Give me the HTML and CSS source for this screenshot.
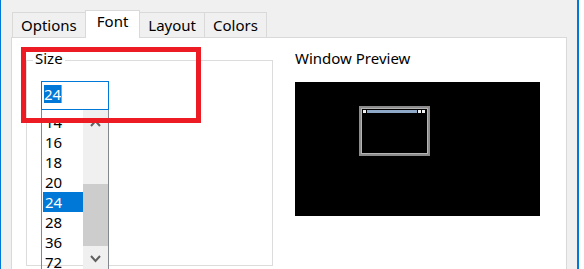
FILE: index.html
```html
<!DOCTYPE html>
<html>
<head>
<meta charset="utf-8">
<link rel="stylesheet" href="styles.css">
</head>
<body>
<div class="frame">
  <div class="tabs">
    <div class="tab">Options</div>
    <div class="tab active">Font</div>
    <div class="tab">Layout</div>
    <div class="tab">Colors</div>
  </div>
  <div class="panel">
    <fieldset class="group">
      <legend>Size</legend>
      <div class="combo">
        <div class="input"><span class="sel">24</span><span class="caret"></span></div>
        <div class="list">
          <div class="items">
            <div class="item">14</div>
            <div class="item">16</div>
            <div class="item">18</div>
            <div class="item">20</div>
            <div class="item selected">24</div>
            <div class="item">28</div>
            <div class="item">36</div>
            <div class="item">72</div>
          </div>
          <div class="scrollbar">
            <div class="arrow">
              <svg width="11" height="8" viewBox="0 0 11 8"><polyline points="1,7 5.5,2 10,7" fill="none" stroke="#606060" stroke-width="2"/></svg>
            </div>
            <div class="track"><div class="thumb"></div></div>
            <div class="arrow">
              <svg width="11" height="8" viewBox="0 0 11 8"><polyline points="1,1 5.5,6 10,1" fill="none" stroke="#606060" stroke-width="2"/></svg>
            </div>
          </div>
        </div>
      </div>
    </fieldset>
    <div class="preview-col">
      <div class="preview-label">Window Preview</div>
      <div class="preview">
        <div class="mini">
          <div class="mini-title">
            <span class="dot"></span>
            <span class="bar"></span>
            <span class="dot"></span>
            <span class="dot"></span>
          </div>
        </div>
      </div>
    </div>
  </div>
  <div class="highlight"></div>
</div>
</body>
</html>
```

FILE: styles.css
```css
* { box-sizing: border-box; }

html, body {
  margin: 0;
  padding: 0;
  width: 584px;
  height: 269px;
  overflow: hidden;
  background: #ffffff;
  font-family: "Noto Sans", "Open Sans", sans-serif;
  font-size: 15px;
  color: #000;
}

.frame {
  position: relative;
  width: 579px;
  height: 269px;
  background: #f0f0f0;
  border-left: 1px solid #0078d7;
  border-right: 2px solid #0078d7;
  overflow: hidden;
}

.tabs {
  display: flex;
  align-items: flex-end;
  margin: 10px 0 0 11px;
  height: 27px;
}

.tab {
  height: 25px;
  padding: 2px 8px 0 8px;
  line-height: 20px;
  border: 1px solid #d9d9d9;
  border-bottom: none;
  background: #f0f0f0;
  margin-left: -1px;
}

.tab:first-child { margin-left: 0; }

.tab.active {
  position: relative;
  z-index: 1;
  height: 28px;
  padding: 0 11px;
  background: #ffffff;
  margin-bottom: -1px;
}

.panel {
  display: flex;
  margin-left: 10px;
  width: 556px;
  height: 240px;
  background: #ffffff;
  border: 1px solid #d9d9d9;
  padding: 10px 0 0 14px;
}

.group {
  margin: 0;
  width: 247px;
  height: 218px;
  padding: 9px 0 0 14px;
  border: 1px solid #dcdcdc;
  flex: none;
}

.group legend {
  margin-left: -8px;
  padding: 0 2px 4px 2px;
  line-height: 20px;
}

.combo {
  width: 68px;
}

.input {
  display: flex;
  align-items: flex-start;
  height: 29px;
  border: 1px solid #0078d7;
  padding: 3px 0 0 2px;
}

.sel {
  background: #0078d7;
  color: #fff;
  line-height: 18px;
  height: 18px;
}

.caret {
  width: 1px;
  height: 18px;
  background: #ff8728;
}

.list {
  display: flex;
  height: 162px;
  border-left: 1px solid #828790;
  border-right: 1px solid #828790;
}

.items {
  flex: 1;
  padding: 2px 0 0 1px;
  overflow: hidden;
}

.item {
  height: 20px;
  line-height: 20px;
  padding-left: 2px;
}

.item.selected {
  background: #0078d7;
  color: #fff;
}

.scrollbar {
  width: 25px;
  display: flex;
  flex-direction: column;
  background: #f0f0f0;
}

.arrow {
  height: 26px;
  display: flex;
  align-items: center;
  justify-content: center;
  flex: none;
}

.track {
  flex: 1;
  display: flex;
  flex-direction: column;
  justify-content: flex-end;
}

.thumb {
  height: 62px;
  background: #cdcdcd;
}

.preview-col {
  margin-left: 22px;
}

.preview-label {
  line-height: 20px;
  margin-bottom: 14px;
}

.preview {
  position: relative;
  width: 245px;
  height: 134px;
  background: #000;
}

.mini {
  position: absolute;
  left: 64px;
  top: 24px;
  width: 71px;
  height: 50px;
  border: 2px solid #8c8c8c;
  box-shadow: inset 0 0 0 1px #b4b4b4;
  padding: 2px 3px 0 2px;
}

.mini-title {
  display: flex;
  height: 3px;
  gap: 1px;
}

.mini-title .dot {
  width: 3px;
  background: #f0f0f0;
}

.mini-title .bar {
  flex: 1;
  background: #8fa9c9;
}

.highlight {
  position: absolute;
  left: 20px;
  top: 47px;
  width: 180px;
  height: 76px;
  border: 5px solid #ed1c24;
}
```
